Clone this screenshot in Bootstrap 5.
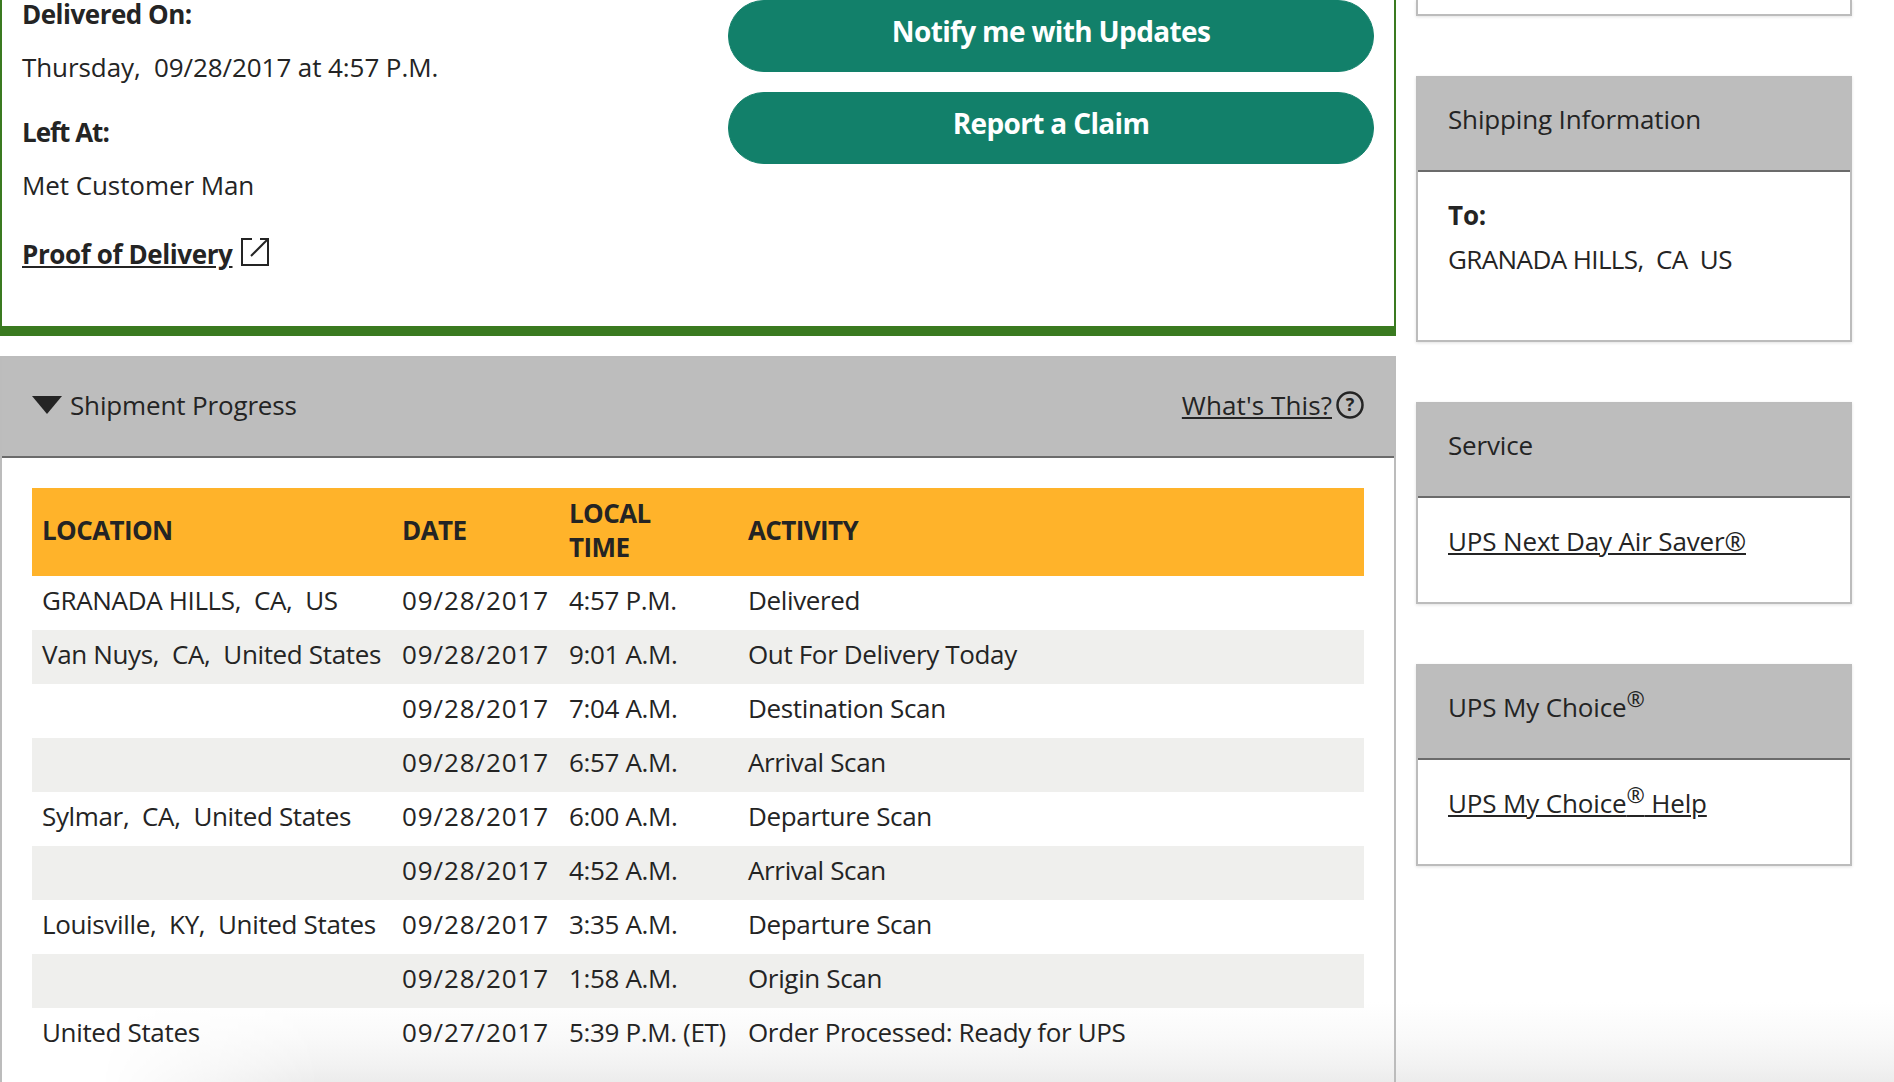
<!doctype html>
<html lang="en">
<head>
  <meta charset="utf-8">
  <meta name="viewport" content="width=device-width, initial-scale=1">
  <title>Shipment Progress</title>
  <link href="https://cdn.jsdelivr.net/npm/bootstrap@5.3.0/dist/css/bootstrap.min.css" rel="stylesheet">
  <style>
    html, body { height: 1082px; overflow: hidden; }
    body {
      position: relative;
      background: #fff;
      color: #242424;
      font-family: "Open Sans", "Lato", sans-serif;
      font-size: 26px;
      letter-spacing: -.15px;
      line-height: 34px;
    }
    a { color: #242424; }

    .page-wrap { position: relative; z-index: 1; width: 1852px; gap: 20px; }
    .main-col { width: 1396px; flex: none; }
    .side-col { width: 436px; flex: none; }

    .delivered-box {
      height: 336px;
      border: solid #3a7a20;
      border-width: 0 2px 10px 2px;
      padding: 0 20px;
    }
    .info-col p { margin: 0; line-height: 28px; }
    .info-col .lbl { font-weight: 700; letter-spacing: -.5px; }
    .info-col .val1 { margin-top: 25px; letter-spacing: -.08px; }
    .info-col .lbl2 { margin-top: 37px; letter-spacing: -1px; }
    .info-col .proof { margin-top: 39px; }
    .info-col .proof a { font-weight: 700; letter-spacing: -.4px; }
    .ext-icon { width: 28px; height: 28px; margin-left: 8px; vertical-align: -2px; }

    .btn-col { width: 646px; gap: 20px; }
    .btn-ups {
      --bs-btn-bg: #12806a;
      --bs-btn-border-color: #12806a;
      --bs-btn-color: #fff;
      --bs-btn-font-size: 28px;
      --bs-btn-font-weight: 700;
      --bs-btn-border-radius: 36px;
      --bs-btn-line-height: 34px;
      letter-spacing: -.65px;
      height: 72px;
      padding: 13px 0 21px;
    }

    .panel-box { border: 2px solid #bcbcbc; box-shadow: 0 1px 3px rgba(0, 0, 0, .12); }
    .panel-head {
      background: #bdbdbd;
      border-bottom: 2px solid #6b6b6b;
      height: 94px;
      padding: 0 30px 10px;
    }
    .panel-foot { padding: 0 30px 18px; }
    .side-col .panel-box { margin-bottom: 60px; }
    .side-col .stub-box { height: 16px; border-top: 0; }

    .progress-box {
      margin-top: 20px;
      height: 726px;
      border-bottom: 0;
      box-shadow: none;
    }
    .progress-head {
      height: 100px;
      padding: 0 30px 5px 30px;
    }
    .progress-head a { letter-spacing: .1px; }
    .tri-down {
      width: 0;
      height: 0;
      border-left: 15px solid transparent;
      border-right: 15px solid transparent;
      border-top: 18px solid #242424;
      margin-right: 8px;
    }
    .help-icon { width: 28px; height: 28px; margin-left: 4px; }

    .ship-table {
      --bs-table-color: #242424;
      --bs-table-bg: transparent;
      width: 1332px;
      margin: 30px 0 0 30px;
      table-layout: fixed;
      letter-spacing: -.35px;
    }
    .ship-table > :not(caption) > * > * {
      border: 0;
      padding: 0 0 6px 10px;
      height: 54px;
      vertical-align: middle;
      line-height: 34px;
      white-space: nowrap;
    }
    .ship-table thead th {
      background: #ffb32a;
      height: 88px;
      padding-bottom: 4px;
      font-weight: 700;
      letter-spacing: -.6px;
    }
    .ship-table .date-cell { letter-spacing: .9px; }
    .ship-table tr.alt-row > * { background: #efefed; }

    .ship-info { padding: 21px 30px 0; height: 168px; }
    .ship-info p { margin: 0; line-height: 44px; }
    .ship-info .place { letter-spacing: -.6px; }

    sup.reg { font-size: 22px; top: -.45em; }

    .bottom-fade {
      position: absolute;
      left: 0;
      right: 0;
      bottom: 0;
      height: 80px;
      z-index: 0;
      background: linear-gradient(to bottom, #fff, #f9f9f9 45%, #f2f2f2 80%, #ececec);
      -webkit-mask-image: linear-gradient(to right, transparent 100px, #000 320px);
      mask-image: linear-gradient(to right, transparent 100px, #000 320px);
    }
  </style>
</head>

<body>
  <div class="page-wrap d-flex">
    <div class="main-col">
      <div class="delivered-box d-flex justify-content-between">
        <div class="info-col">
          <p class="lbl">Delivered On:</p>
          <p class="val1">Thursday,&nbsp; 09/28/2017 at 4:57 P.M.</p>
          <p class="lbl lbl2">Left At:</p>
          <p class="val1">Met Customer Man</p>
          <p class="proof"><a href="#">Proof of Delivery</a><svg class="ext-icon" viewBox="0 0 28 28" fill="none" stroke="#242424" stroke-width="2"><path d="M11 1H1v26h26V1h-8"/><path d="M10 18L26 2"/></svg></p>
        </div>
        <div class="btn-col d-flex flex-column">
          <a href="#" class="btn btn-ups">Notify me with Updates</a>
          <a href="#" class="btn btn-ups">Report a Claim</a>
        </div>
      </div>

      <div class="panel-box progress-box">
        <div class="panel-head progress-head d-flex align-items-center justify-content-between">
          <div class="d-flex align-items-center"><span class="tri-down"></span>Shipment Progress</div>
          <div class="d-flex align-items-center"><a href="#">What's This?</a>
            <svg class="help-icon" viewBox="0 0 28 28"><circle cx="14" cy="14" r="12.5" fill="none" stroke="#242424" stroke-width="2.5"/><text x="14" y="20" font-size="18" font-weight="700" text-anchor="middle" fill="#242424">?</text></svg>
          </div>
        </div>
        <table class="table ship-table">
          <colgroup>
            <col style="width: 360px">
            <col style="width: 167px">
            <col style="width: 179px">
            <col>
          </colgroup>
          <thead>
            <tr><th>LOCATION</th><th>DATE</th><th>LOCAL<br>TIME</th><th>ACTIVITY</th></tr>
          </thead>
          <tbody>
            <tr><td>GRANADA HILLS,&nbsp; CA,&nbsp; US</td><td class="date-cell">09/28/2017</td><td>4:57 P.M.</td><td>Delivered</td></tr>
            <tr class="alt-row"><td>Van Nuys,&nbsp; CA,&nbsp; United States</td><td class="date-cell">09/28/2017</td><td>9:01 A.M.</td><td>Out For Delivery Today</td></tr>
            <tr><td></td><td class="date-cell">09/28/2017</td><td>7:04 A.M.</td><td>Destination Scan</td></tr>
            <tr class="alt-row"><td></td><td class="date-cell">09/28/2017</td><td>6:57 A.M.</td><td>Arrival Scan</td></tr>
            <tr><td>Sylmar,&nbsp; CA,&nbsp; United States</td><td class="date-cell">09/28/2017</td><td>6:00 A.M.</td><td>Departure Scan</td></tr>
            <tr class="alt-row"><td></td><td class="date-cell">09/28/2017</td><td>4:52 A.M.</td><td>Arrival Scan</td></tr>
            <tr><td>Louisville,&nbsp; KY,&nbsp; United States</td><td class="date-cell">09/28/2017</td><td>3:35 A.M.</td><td>Departure Scan</td></tr>
            <tr class="alt-row"><td></td><td class="date-cell">09/28/2017</td><td>1:58 A.M.</td><td>Origin Scan</td></tr>
            <tr><td>United States</td><td class="date-cell">09/27/2017</td><td>5:39 P.M. (ET)</td><td>Order Processed: Ready for UPS</td></tr>
          </tbody>
        </table>
      </div>
    </div>

    <div class="side-col">
      <div class="panel-box stub-box"></div>

      <div class="panel-box">
        <div class="panel-head d-flex align-items-center">Shipping Information</div>
        <div class="ship-info">
          <p class="fw-bold">To:</p>
          <p class="place">GRANADA HILLS,&nbsp; CA&nbsp; US</p>
        </div>
      </div>

      <div class="panel-box">
        <div class="panel-head d-flex align-items-center">Service</div>
        <div class="panel-foot d-flex align-items-center" style="height: 104px"><a href="#">UPS Next Day Air Saver®</a></div>
      </div>

      <div class="panel-box">
        <div class="panel-head d-flex align-items-center"><span>UPS My Choice<sup class="reg">®</sup></span></div>
        <div class="panel-foot d-flex align-items-center" style="height: 104px"><a href="#">UPS My Choice<sup class="reg">®</sup> Help</a></div>
      </div>
    </div>
  </div>
  <div class="bottom-fade"></div>

  <script src="https://cdn.jsdelivr.net/npm/bootstrap@5.3.0/dist/js/bootstrap.bundle.min.js"></script>
</body>
</html>
